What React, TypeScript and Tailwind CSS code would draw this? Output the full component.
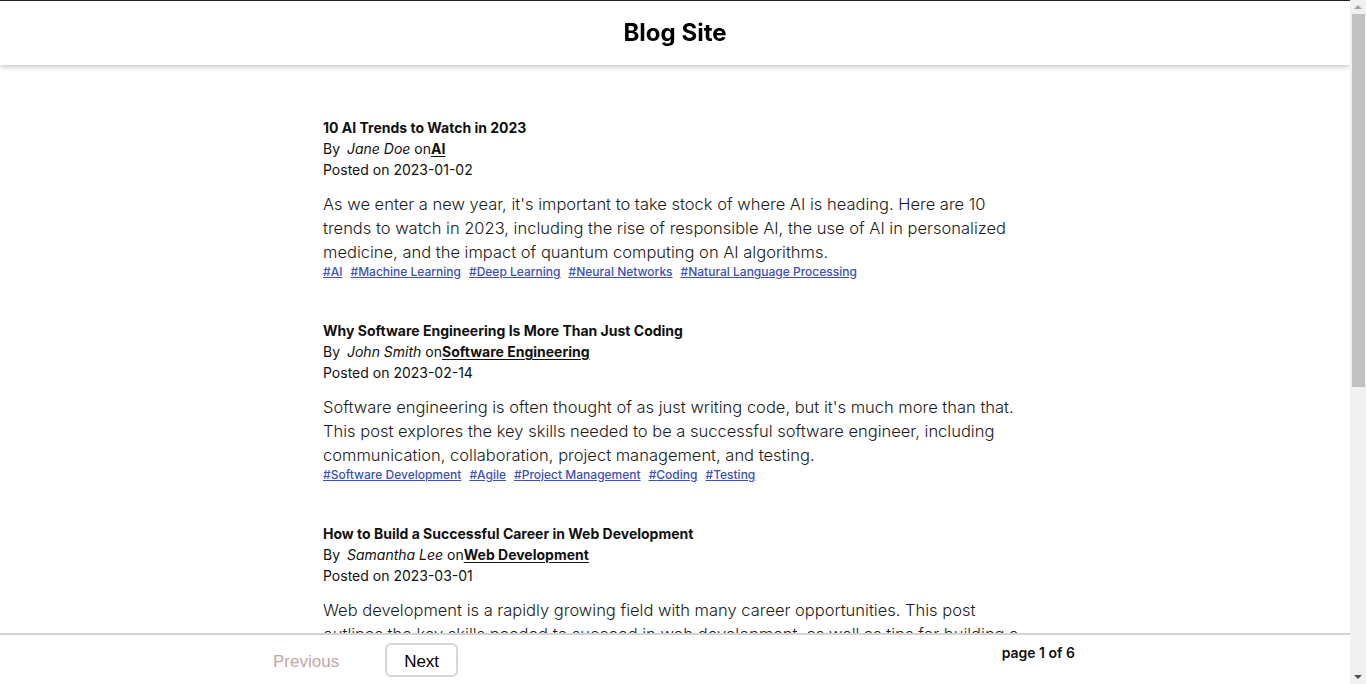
import React from "react";

type Post = {
  title: string;
  author: string;
  category: string;
  date: string;
  body: string;
  tags: string[];
};

const posts: Post[] = [
  {
    title: "10 AI Trends to Watch in 2023",
    author: "Jane Doe",
    category: "AI",
    date: "2023-01-02",
    body: "As we enter a new year, it's important to take stock of where AI is heading. Here are 10 trends to watch in 2023, including the rise of responsible AI, the use of AI in personalized medicine, and the impact of quantum computing on AI algorithms.",
    tags: ["AI", "Machine Learning", "Deep Learning", "Neural Networks", "Natural Language Processing"],
  },
  {
    title: "Why Software Engineering Is More Than Just Coding",
    author: "John Smith",
    category: "Software Engineering",
    date: "2023-02-14",
    body: "Software engineering is often thought of as just writing code, but it's much more than that. This post explores the key skills needed to be a successful software engineer, including communication, collaboration, project management, and testing.",
    tags: ["Software Development", "Agile", "Project Management", "Coding", "Testing"],
  },
  {
    title: "How to Build a Successful Career in Web Development",
    author: "Samantha Lee",
    category: "Web Development",
    date: "2023-03-01",
    body: "Web development is a rapidly growing field with many career opportunities. This post outlines the key skills needed to succeed in web development, as well as tips for building a strong portfolio and landing your first job.",
    tags: ["Web Development", "Career", "Portfolio", "JavaScript", "HTML"],
  },
  {
    title: "The Future of Cloud Computing",
    author: "Michael Brown",
    category: "Cloud",
    date: "2023-03-18",
    body: "Cloud computing has changed the way businesses operate. In this post we look at where the cloud is going next, from serverless architectures and edge computing to multi-cloud strategies and the growing focus on security.",
    tags: ["Cloud", "Serverless", "Edge Computing", "DevOps"],
  },
  {
    title: "Getting Started with Data Science",
    author: "Emily Chen",
    category: "Data Science",
    date: "2023-04-05",
    body: "Data science combines statistics, programming and domain knowledge to extract insight from data. This post covers the tools, languages and learning resources you need to begin your journey as a data scientist.",
    tags: ["Data Science", "Python", "Statistics", "Machine Learning"],
  },
];

const PostItem = ({ post }: { post: Post }) => (
  <article className="text-[#111]">
    <h2 className="text-[14px] leading-[21px] font-bold">{post.title}</h2>
    <p className="text-[14px] leading-[21px]">
      By <em className="ml-[3px]">{post.author}</em> on
      <a href="#" className="font-bold underline underline-offset-2">{post.category}</a>
    </p>
    <p className="text-[14px] leading-[21px]">Posted on {post.date}</p>
    <p className="mt-3 text-[16.5px] leading-[24px] font-light text-[#1a1a1a]">{post.body}</p>
    <div className="flex flex-wrap gap-x-2 text-[12px] leading-[16px] font-medium">
      {post.tags.map((t) => (
        <a key={t} href="#" className="text-[#3b4fc0] underline">
          #{t}
        </a>
      ))}
    </div>
  </article>
);

// the page scrollbar, as the browser draws it in the reference
const Scrollbar = () => (
  <div className="w-4 shrink-0 bg-[#f1f1f1] flex flex-col items-center">
    <div className="h-[14px] flex items-center justify-center">
      <div className="w-0 h-0 border-x-4 border-x-transparent border-b-4 border-b-[#a3a3a3]" />
    </div>
    <div className="w-[13px] h-[373px] bg-[#c1c1c1]" />
    <div className="flex-1" />
    <div className="h-[14px] flex items-center justify-center">
      <div className="w-0 h-0 border-x-4 border-x-transparent border-t-4 border-t-[#505050]" />
    </div>
  </div>
);

export default function App() {
  return (
    <div className="h-screen flex bg-white font-['Inter','Noto_Sans',sans-serif]">
      <div className="flex-1 min-w-0 overflow-y-auto [scrollbar-width:none]">
        <header className="sticky top-0 z-10 h-[65px] bg-white border-t border-[#222] shadow-[0_2px_5px_rgba(0,0,0,0.22)] flex items-center justify-center">
          <h1 className="text-[24px] font-bold text-black">Blog Site</h1>
        </header>

        <main className="max-w-3xl mx-auto px-8 pt-[52px] pb-[48px] space-y-10">
          {posts.map((p) => (
            <PostItem key={p.title} post={p} />
          ))}
        </main>

        <footer className="sticky bottom-0 z-10 h-[51px] bg-white border-t-2 border-[#d4d4d4]">
          <div className="max-w-[800px] mx-auto flex items-start justify-between pt-[8px]">
            <div className="flex items-center gap-[46px] font-['Liberation_Sans',Arial,sans-serif] text-[17px]">
              <button className="h-[34px] pt-[3px] text-[#c9a3a8] cursor-default -ml-[2px]">Previous</button>
              <button className="h-[34px] pt-[3px] px-[17px] border-2 border-[#d6d6d6] rounded-md text-black">Next</button>
            </div>
            <span className="text-[14px] leading-[20px] font-semibold text-[#111]">page 1 of 6</span>
          </div>
        </footer>
      </div>
      <Scrollbar />
    </div>
  );
}
